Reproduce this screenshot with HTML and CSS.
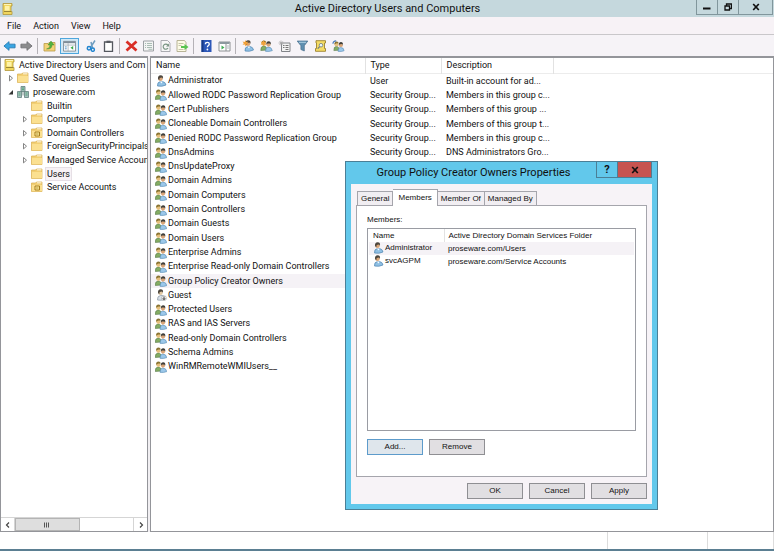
FILE: index.html
```
<!DOCTYPE html>
<html lang="en">

<head>
    <meta charset="UTF-8">
    <meta name="viewport" content="width=device-width, initial-scale=1.0">
    <title>Active Directory Users and Computers</title>
    <link rel="stylesheet" href="styles.css">
</head>

<body>
    <!-- Icon set -->
    <svg class="icon-set" aria-hidden="true">
        <symbol id="i-console" viewBox="0 0 12 12">
            <path d="M2 .5h9v2.500h-1v5.500h1v3h-9z" fill="#f0d75f" stroke="#b2973a" stroke-width=".8"/>
            <path d="M3 1.500h7" stroke="#fff6b8" stroke-width="1"/>
            <path d="M3 8.500h7" stroke="#9a8636" stroke-width="1"/>
            <path d="M4 3h4.500v4.500h-4.500z" fill="#fff3a8"/>
        </symbol>
        <symbol id="i-folder" viewBox="0 0 12 12">
            <path d="M.5 10.500v-8.500h4l1-1h5.500v9.500z" fill="#f2cf73" stroke="#d9ae4d" stroke-width=".7"/>
            <path d="M1 4h10v6.200h-10z" fill="#fbe090"/>
            <path d="M6 1.800h4.500" stroke="#fff" stroke-width=".8"/>
        </symbol>
        <symbol id="i-ou" viewBox="0 0 12 12">
            <use href="#i-folder"/>
            <path d="M4 5h4.500v4h-4.500z" fill="#fff0a0" stroke="#a67c1c" stroke-width="1"/>
            <path d="M5 7h2.500" stroke="#a67c1c" stroke-width=".8"/>
        </symbol>
        <symbol id="i-domain" viewBox="0 0 12 12">
            <path d="M4 .5h4v5h-4zM.5 5.500h4v6h-4zM7.500 5.500h4v6h-4z" fill="#a9bfc0" stroke="#62807c" stroke-width=".8"/>
            <path d="M5 2h2M5 3.700h2M1.500 7h2M1.500 9h2M8.500 7h2M8.500 9h2" stroke="#43a56b" stroke-width=".9"/>
            <path d="M6 5.500v4" stroke="#62807c" stroke-width=".8"/>
        </symbol>
        <symbol id="i-user" viewBox="0 0 12 12">
            <path d="M2.500 11q-.5-4 3-4.500h2q3 .5 3.500 3.500q-4 2-8.500 1z" fill="#8fc0e4" stroke="#4d84b0" stroke-width=".7"/>
            <path d="M5 6.500l1.500 2 1-2z" fill="#fff"/>
            <circle cx="5.500" cy="3.800" r="2.300" fill="#d9a578"/>
            <path d="M3 4q-.3-3.700 2.700-3.700 2.800 0 2.300 3.400l-1-1.200-2.300.5-.4 2.200z" fill="#4d473e"/>
        </symbol>
        <symbol id="i-guest" viewBox="0 0 12 12">
            <path d="M2.500 11q-.5-4 3-4.500h2q3 .5 3 3.500q-4 2-8 1z" fill="#d7e0e8" stroke="#8895a2" stroke-width=".7"/>
            <circle cx="5.500" cy="3.800" r="2.300" fill="#e2c9a4"/>
            <path d="M3 4q-.3-3.700 2.700-3.700 2.800 0 2.300 3.400l-1-1.200-2.300.5-.4 2.200z" fill="#4d473e"/>
            <circle cx="9" cy="9.200" r="2.400" fill="#fff" stroke="#888" stroke-width=".5"/>
            <path d="M9 7.500v3M7.800 9.300l1.200 1.400 1.200-1.400" fill="none" stroke="#222" stroke-width=".9"/>
        </symbol>
        <symbol id="i-group" viewBox="0 0 12 12">
            <path d="M.3 10.500q-.3-4.200 2.700-4.500 3-.2 3.500 4z" fill="#84ad63" stroke="#55794a" stroke-width=".6"/>
            <circle cx="3.300" cy="3.800" r="2.100" fill="#e6c07c"/>
            <path d="M1 3.800q0-3.300 2.500-3.300 2.200 0 2.200 2.200l-2.200-.2z" fill="#8a7432"/>
            <path d="M5 11.300q0-4 2.500-4.300 3.700 0 4.300 3.600q-3.300 1.300-6.800.7z" fill="#9cc8ea" stroke="#4d84b0" stroke-width=".6"/>
            <circle cx="8" cy="4.600" r="2.100" fill="#d9a578"/>
            <path d="M5.800 4.600q0-3.300 2.400-3.300 2.400 0 2.100 3.100l-1-1-2.300.2z" fill="#3f3e39"/>
        </symbol>
        <symbol id="i-star" viewBox="0 0 12 12">
            <path d="M3 0l.8 1.900 2.200-.4-1.300 1.700 1.300 1.600-2.200-.2-.8 1.900-.8-1.900-2.200.2 1.300-1.600-1.300-1.700 2.200.4z" fill="#f2a23a"/>
        </symbol>
        <symbol id="i-back" viewBox="0 0 14 12">
            <path d="M1 6l5.500-4.700v2.700h6.500v4h-6.500v2.700z" fill="#39a5e2" stroke="#2277b0" stroke-width=".9"/>
        </symbol>
        <symbol id="i-forward" viewBox="0 0 14 12">
            <path d="M13 6l-5.500-4.700v2.700h-6.500v4h6.500v2.700z" fill="#8c8c8e" stroke="#6c6c70" stroke-width=".9"/>
        </symbol>
        <symbol id="i-up" viewBox="0 0 12 12">
            <path d="M.5 11v-7.500h4l1-1h6v8.500z" fill="#f3d377" stroke="#b99b47" stroke-width=".8"/>
            <path d="M3 9q3.500-.5 3.500-4h-2l3-4 3 4h-2q0 4.500-5.500 4z" fill="#52b33f" stroke="#35822c" stroke-width=".4"/>
        </symbol>
        <symbol id="i-tree" viewBox="0 0 14 12">
            <path d="M.5 1h13v10.500h-13z" fill="#fff" stroke="#818c94"/>
            <path d="M1 1h12v2h-12z" fill="#7e8d99"/>
            <path d="M5.500 3v8.500M1 5h12" stroke="#9ba7af" stroke-width=".8"/>
            <path d="M2 7h2M2 9h2" stroke="#4c8fc7"/>
            <path d="M11 6v4l-3-2z" fill="#38a845"/>
        </symbol>
        <symbol id="i-cut" viewBox="0 0 12 12">
            <path d="M9.500.5l-4.500 7M5.500 2l1.500 6" fill="none" stroke="#6f9dc0" stroke-width="1.500"/>
            <circle cx="3.500" cy="8.300" r="1.700" fill="none" stroke="#2385cf" stroke-width="1.500"/>
            <circle cx="7.300" cy="9.700" r="1.600" fill="none" stroke="#2385cf" stroke-width="1.500"/>
        </symbol>
        <symbol id="i-paste" viewBox="0 0 12 12">
            <path d="M2 2h8v9.500h-8z" fill="#fff" stroke="#55585f" stroke-width="1.300"/>
            <path d="M4 .7h4v2.300h-4z" fill="#55585f"/>
        </symbol>
        <symbol id="i-delete" viewBox="0 0 12 12">
            <path d="M1 1.500l10 9M11 1.500l-10 9" stroke="#d92e26" stroke-width="2.800"/>
        </symbol>
        <symbol id="i-props" viewBox="0 0 12 12">
            <path d="M1 1h10v10h-10z" fill="#f3f4f4" stroke="#9da1a5"/>
            <path d="M2.500 3.500h1M2.500 5.500h1M2.500 7.500h1M4.500 3.500h5M4.500 5.500h5M4.500 7.500h5M6 9.300h4" stroke="#a9bdb4"/>
        </symbol>
        <symbol id="i-refresh" viewBox="0 0 12 12">
            <path d="M1.500.5h6.500l2.500 2.500v8.500h-9z" fill="#f7f7f7" stroke="#a2a4a8" stroke-width=".9"/>
            <path d="M8.300 5a2.600 2.600 0 1 0 .2 3" fill="none" stroke="#7a9684" stroke-width="1.200"/>
            <path d="M9.500 3.500v3h-3z" fill="#7a9684"/>
        </symbol>
        <symbol id="i-export" viewBox="0 0 12 12">
            <path d="M.5.5h7.500l1.500 2v9h-9z" fill="#fdfbe6" stroke="#b0ac8c" stroke-width=".9"/>
            <path d="M2 3.500h5M2 5.500h3M2 9.500h5" stroke="#b5b59b" stroke-width=".8"/>
            <path d="M4.500 6h3.500v-2l4 3-4 3v-2h-3.500z" fill="#58c350"/>
        </symbol>
        <symbol id="i-help" viewBox="0 0 12 12">
            <path d="M1 0h10v12h-10z" fill="#2c57b8"/>
            <path d="M1 0h2v12h-2z" fill="#173a86"/>
            <path d="M4.900 4.300q0-2 2-2 1.900 0 1.900 1.700 0 1-1 1.600-.9.500-.9 1.700" fill="none" stroke="#fff" stroke-width="1.300"/>
            <circle cx="6.900" cy="9.500" r=".9" fill="#fff"/>
        </symbol>
        <symbol id="i-panel" viewBox="0 0 12 12">
            <path d="M.5 2h11v9h-11z" fill="#fff" stroke="#8d9294"/>
            <path d="M1 2h10v2h-10z" fill="#8c999f"/>
            <path d="M7.500 4v7" stroke="#8d9294"/>
            <path d="M3 5.500v4l3-2z" fill="#3fae55"/>
            <path d="M8.500 6h2M8.500 8h2" stroke="#9ba7af" stroke-width=".8"/>
        </symbol>
        <symbol id="i-newou" viewBox="0 0 12 12">
            <path d="M3 3h8.500v8.500h-8.500z" fill="#f3f3f3" stroke="#818488"/>
            <path d="M4.500 5.500h1.500M7 5.500h3M4.500 7.500h1.500M7 7.500h3M7 9.500h3" stroke="#777"/>
            <path d="M0 3h5M2.500.5v5M1 1.300l3.400 3.400M4.400 1.300l-3.400 3.400" stroke="#a5a5a5" stroke-width=".7"/>
        </symbol>
        <symbol id="i-filter" viewBox="0 0 12 12">
            <path d="M.7 1h10.600l-3.500 4.700v5.300l-3.400-1.500v-3.800z" fill="#5f8fb0" stroke="#486f8c" stroke-width=".7"/>
            <path d="M2.500 2.300h7" stroke="#afd0e4"/>
        </symbol>
        <symbol id="i-find" viewBox="0 0 12 12">
            <path d="M1.500.7h9.500v2.300h-1v5.500h1v2.800h-10v-2.800h1v-5.500h-.5z" fill="#f5dc65" stroke="#9c822c" stroke-width=".9"/>
            <circle cx="6.500" cy="5.200" r="1.800" fill="#e7f5fb" stroke="#6e7c80" stroke-width=".8"/>
            <path d="M5.200 6.600l-2 2" stroke="#6e7c80" stroke-width="1.200"/>
        </symbol>
        <symbol id="i-open" viewBox="0 0 6 8">
            <path d="M5 2v4.500h-4.500z" fill="#333"/>
        </symbol>
        <symbol id="i-closed" viewBox="0 0 6 8">
            <path d="M1.500 1.500l3 2.700-3 2.700z" fill="#fff" stroke="#777" stroke-width=".9"/>
        </symbol>
    </svg>

    <div class="window">
        <!-- Title bar -->
        <header class="titlebar">
            <svg class="icon"><use href="#i-console"/></svg>
            <h1>Active Directory Users and Computers</h1>
            <div class="window-buttons">
                <button type="button" aria-label="Minimize"><svg class="glyph" viewBox="0 0 8 8"><path d="M0 5.500h7.500" stroke="#111" stroke-width="2"/></svg></button>
                <button type="button" aria-label="Restore"><svg class="glyph" viewBox="0 0 8 8"><path d="M1 3h4.500v4h-4.500zM2.500 2.500v-1.500h5v4.500h-1.500" fill="none" stroke="#111" stroke-width="1.300"/></svg></button>
                <button type="button" class="close" aria-label="Close"><svg class="glyph" viewBox="0 0 8 8"><path d="M1.200 1l5.600 6M6.800 1l-5.600 6" stroke="#111" stroke-width="1.700"/></svg></button>
            </div>
        </header>

        <!-- Menu -->
        <nav class="menubar">
            <button type="button">File</button>
            <button type="button">Action</button>
            <button type="button">View</button>
            <button type="button">Help</button>
        </nav>

        <!-- Toolbar -->
        <div class="toolbar">
            <button type="button" aria-label="Back"><svg class="tool"><use href="#i-back"/></svg></button>
            <button type="button" aria-label="Forward"><svg class="tool"><use href="#i-forward"/></svg></button>
            <span class="separator"></span>
            <button type="button" aria-label="Up one level"><svg class="tool"><use href="#i-up"/></svg></button>
            <button type="button" class="pressed" aria-label="Show console tree"><svg class="tool"><use href="#i-tree"/></svg></button>
            <span class="spacer"></span>
            <button type="button" aria-label="Cut"><svg class="tool"><use href="#i-cut"/></svg></button>
            <button type="button" aria-label="Paste"><svg class="tool"><use href="#i-paste"/></svg></button>
            <span class="separator"></span>
            <button type="button" aria-label="Delete"><svg class="tool"><use href="#i-delete"/></svg></button>
            <button type="button" aria-label="Properties"><svg class="tool"><use href="#i-props"/></svg></button>
            <button type="button" aria-label="Refresh"><svg class="tool"><use href="#i-refresh"/></svg></button>
            <button type="button" aria-label="Export list"><svg class="tool"><use href="#i-export"/></svg></button>
            <span class="separator"></span>
            <div class="tool-group">
                <button type="button" aria-label="Help topics"><svg class="tool"><use href="#i-help"/></svg></button>
                <button type="button" aria-label="Show action pane"><svg class="tool"><use href="#i-panel"/></svg></button>
            </div>
            <span class="separator"></span>
            <div class="tool-group">
                <button type="button" aria-label="New user"><svg class="tool"><use href="#i-user"/><use href="#i-star"/></svg></button>
                <button type="button" aria-label="New group"><svg class="tool"><use href="#i-group"/><use href="#i-star"/></svg></button>
                <button type="button" aria-label="New organizational unit"><svg class="tool"><use href="#i-newou"/></svg></button>
                <button type="button" aria-label="Filter"><svg class="tool"><use href="#i-filter"/></svg></button>
                <button type="button" aria-label="Find"><svg class="tool"><use href="#i-find"/></svg></button>
                <button type="button" aria-label="Add to group"><svg class="tool" viewBox="0 0 13 13"><use href="#i-group" x="1" y="1" width="12" height="12"/><path d="M.5 4q0-3 3.500-3" fill="none" stroke="#3f74b5" stroke-width="1.200"/></svg></button>
            </div>
        </div>

        <main class="panes">
            <!-- Console tree -->
            <section class="tree-pane">
                <ul class="tree">
                    <li><svg class="icon"><use href="#i-console"/></svg><span>Active Directory Users and Com</span></li>
                    <li class="level-1"><svg class="arrow"><use href="#i-closed"/></svg><svg class="icon"><use href="#i-folder"/></svg><span>Saved Queries</span></li>
                    <li class="level-1"><svg class="arrow"><use href="#i-open"/></svg><svg class="icon"><use href="#i-domain"/></svg><span>proseware.com</span></li>
                    <li class="level-2"><svg class="arrow"></svg><svg class="icon"><use href="#i-folder"/></svg><span>Builtin</span></li>
                    <li class="level-2"><svg class="arrow"><use href="#i-closed"/></svg><svg class="icon"><use href="#i-folder"/></svg><span>Computers</span></li>
                    <li class="level-2"><svg class="arrow"><use href="#i-closed"/></svg><svg class="icon"><use href="#i-ou"/></svg><span>Domain Controllers</span></li>
                    <li class="level-2"><svg class="arrow"><use href="#i-closed"/></svg><svg class="icon"><use href="#i-folder"/></svg><span>ForeignSecurityPrincipals</span></li>
                    <li class="level-2"><svg class="arrow"><use href="#i-closed"/></svg><svg class="icon"><use href="#i-folder"/></svg><span>Managed Service Accoun</span></li>
                    <li class="level-2 selected"><svg class="arrow"></svg><svg class="icon"><use href="#i-folder"/></svg><span>Users</span></li>
                    <li class="level-2"><svg class="arrow"></svg><svg class="icon"><use href="#i-ou"/></svg><span>Service Accounts</span></li>
                </ul>
                <div class="scrollbar">
                    <button type="button" aria-label="Scroll left"><svg class="glyph" viewBox="0 0 8 8"><path d="M5 1.500l-2.500 2.500 2.500 2.500" fill="none" stroke="#444" stroke-width="1.200"/></svg></button>
                    <div class="track"><div class="thumb"><svg class="glyph" viewBox="0 0 8 8"><path d="M1.500 1.500v5M3.500 1.500v5M5.500 1.500v5" stroke="#555" stroke-width="1"/></svg></div></div>
                    <button type="button" aria-label="Scroll right"><svg class="glyph" viewBox="0 0 8 8"><path d="M3 1.500l2.500 2.500-2.500 2.500" fill="none" stroke="#444" stroke-width="1.200"/></svg></button>
                </div>
            </section>

            <!-- Contents of the selected container -->
            <section class="list-pane">
                <table class="objects">
                    <colgroup>
                        <col class="col-name">
                        <col class="col-type">
                        <col class="col-description">
                        <col>
                    </colgroup>
                    <thead>
                        <tr><th>Name</th><th>Type</th><th>Description</th><td></td></tr>
                    </thead>
                    <tbody>
                        <tr><td><svg class="icon"><use href="#i-user"/></svg>Administrator</td><td>User</td><td>Built-in account for ad...</td></tr>
                        <tr><td><svg class="icon"><use href="#i-group"/></svg>Allowed RODC Password Replication Group</td><td>Security Group...</td><td>Members in this group c...</td></tr>
                        <tr><td><svg class="icon"><use href="#i-group"/></svg>Cert Publishers</td><td>Security Group...</td><td>Members of this group ...</td></tr>
                        <tr><td><svg class="icon"><use href="#i-group"/></svg>Cloneable Domain Controllers</td><td>Security Group...</td><td>Members of this group t...</td></tr>
                        <tr><td><svg class="icon"><use href="#i-group"/></svg>Denied RODC Password Replication Group</td><td>Security Group...</td><td>Members in this group c...</td></tr>
                        <tr><td><svg class="icon"><use href="#i-group"/></svg>DnsAdmins</td><td>Security Group...</td><td>DNS Administrators Gro...</td></tr>
                        <tr><td><svg class="icon"><use href="#i-group"/></svg>DnsUpdateProxy</td></tr>
                        <tr><td><svg class="icon"><use href="#i-group"/></svg>Domain Admins</td></tr>
                        <tr><td><svg class="icon"><use href="#i-group"/></svg>Domain Computers</td></tr>
                        <tr><td><svg class="icon"><use href="#i-group"/></svg>Domain Controllers</td></tr>
                        <tr><td><svg class="icon"><use href="#i-group"/></svg>Domain Guests</td></tr>
                        <tr><td><svg class="icon"><use href="#i-group"/></svg>Domain Users</td></tr>
                        <tr><td><svg class="icon"><use href="#i-group"/></svg>Enterprise Admins</td></tr>
                        <tr><td><svg class="icon"><use href="#i-group"/></svg>Enterprise Read-only Domain Controllers</td></tr>
                        <tr class="selected"><td><svg class="icon"><use href="#i-group"/></svg>Group Policy Creator Owners</td></tr>
                        <tr><td><svg class="icon"><use href="#i-guest"/></svg>Guest</td></tr>
                        <tr><td><svg class="icon"><use href="#i-group"/></svg>Protected Users</td></tr>
                        <tr><td><svg class="icon"><use href="#i-group"/></svg>RAS and IAS Servers</td></tr>
                        <tr><td><svg class="icon"><use href="#i-group"/></svg>Read-only Domain Controllers</td></tr>
                        <tr><td><svg class="icon"><use href="#i-group"/></svg>Schema Admins</td></tr>
                        <tr><td><svg class="icon"><use href="#i-group"/></svg>WinRMRemoteWMIUsers__</td></tr>
                    </tbody>
                </table>
            </section>
        </main>

        <footer class="statusbar">
            <span class="status-main"></span>
            <span class="status-cell"></span>
            <span class="status-last"></span>
        </footer>
    </div>

    <!-- Properties dialog -->
    <div class="dialog" role="dialog" aria-labelledby="dialog-title">
        <div class="dialog-title">
            <h2 id="dialog-title">Group Policy Creator Owners Properties</h2>
            <div class="dialog-buttons">
                <button type="button" aria-label="Help">?</button>
                <button type="button" class="close" aria-label="Close"><svg class="glyph" viewBox="0 0 8 8"><path d="M1.200 1l5.600 6M6.800 1l-5.600 6" stroke="#111" stroke-width="1.700"/></svg></button>
            </div>
        </div>
        <div class="dialog-body">
            <div class="tabs" role="tablist">
                <button type="button" role="tab">General</button>
                <button type="button" role="tab" class="active" aria-selected="true">Members</button>
                <button type="button" role="tab">Member Of</button>
                <button type="button" role="tab">Managed By</button>
            </div>
            <div class="tab-panel" role="tabpanel">
                <p id="members-label">Members:</p>
                <div class="members-box">
                    <table class="members" aria-labelledby="members-label">
                        <colgroup>
                            <col class="col-member">
                            <col>
                        </colgroup>
                        <thead>
                            <tr><th>Name</th><th>Active Directory Domain Services Folder</th></tr>
                        </thead>
                        <tbody>
                            <tr class="selected"><td><svg class="icon"><use href="#i-user"/></svg>Administrator</td><td>proseware.com/Users</td></tr>
                            <tr><td><svg class="icon"><use href="#i-user"/></svg>svcAGPM</td><td>proseware.com/Service Accounts</td></tr>
                        </tbody>
                    </table>
                </div>
                <div class="member-actions">
                    <button type="button" class="push focused">Add...</button>
                    <button type="button" class="push">Remove</button>
                </div>
            </div>
            <div class="dialog-actions">
                <button type="button" class="push">OK</button>
                <button type="button" class="push">Cancel</button>
                <button type="button" class="push">Apply</button>
            </div>
        </div>
    </div>
</body>

</html>
```
FILE: styles.css
```
* {
    box-sizing: border-box;
}

body {
    margin: 0;
    font-family: Roboto, "Open Sans", sans-serif;
    font-size: 9px;
    line-height: 12px;
    color: #111;
    background-color: #fff;
}

h1,
h2,
p,
ul {
    margin: 0;
    padding: 0;
    font-weight: normal;
}

button {
    margin: 0;
    padding: 0;
    border: none;
    background: none;
    font: inherit;
    color: inherit;
}

table {
    width: 100%;
    border-collapse: collapse;
    table-layout: fixed;
}

th,
td {
    padding: 0 0 0 5px;
    text-align: left;
    font-weight: normal;
    white-space: nowrap;
}

.icon-set {
    display: none;
}

.icon {
    width: 12px;
    height: 12px;
    flex: none;
}

.glyph {
    display: block;
    width: 8px;
    height: 8px;
    margin: 0 auto;
}

.window {
    display: flex;
    flex-direction: column;
    height: 100vh;
    border-bottom: 2px solid #5b7f92;
}

/* Title bar */
.titlebar {
    display: grid;
    grid-template-columns: 78px 1fr 78px;
    align-items: center;
    height: 17px;
    padding-left: 1px;
    background-color: #c5d8dd;
}

.titlebar h1 {
    font-size: 11px;
    text-align: center;
}

.window-buttons {
    display: flex;
    align-self: start;
    height: 15px;
}

.window-buttons button {
    width: 21px;
    border: 1px solid #81969c;
    border-top: none;
    border-right: none;
}

.window-buttons .close {
    width: 35px;
    border-right: 1px solid #81969c;
}

/* Menu and toolbar */
.menubar {
    display: flex;
    gap: 12px;
    height: 18px;
    padding-left: 7px;
    background-color: #f7f2f6;
    border-bottom: 1px solid #c9c7ca;
}

.toolbar {
    display: flex;
    align-items: center;
    height: 21px;
    padding-left: 1px;
    background-color: #f6f3f7;
}

.toolbar button {
    width: 17px;
    height: 16px;
}

.toolbar .pressed {
    width: 19px;
    margin-left: 2px;
    border: 1px solid #4ea6dc;
    background-color: #d3e9f6;
}

.tool-group {
    display: flex;
    gap: 1px;
    padding-left: 1px;
}

.tool {
    display: block;
    width: 13px;
    height: 12px;
    margin: 0 auto;
}

.separator {
    width: 1px;
    height: 16px;
    margin: 0 3px 0 2px;
    background-color: #b5b2b7;
}

.spacer {
    width: 4px;
}

/* Panes */
.panes {
    display: flex;
    flex: 1;
    gap: 2px;
    min-height: 0;
    background-color: #f1eff2;
}

.tree-pane {
    display: flex;
    flex-direction: column;
    justify-content: space-between;
    width: 148px;
    border: 1px solid #94959a;
    border-top-width: 2px;
    background-color: #fff;
}

.tree {
    display: grid;
    grid-auto-rows: 1fr;
    height: 136px;
    overflow: hidden;
    list-style: none;
}

.tree li {
    display: flex;
    align-items: center;
    gap: 3px;
    padding-left: 2px;
    white-space: nowrap;
}

.tree .level-1 {
    padding-left: 7px;
}

.tree .level-2 {
    padding-left: 21px;
}

.tree span {
    padding: 0 1px;
}

.tree .selected span {
    background-color: #f7f2f6;
    outline: 1px solid #e6dfe5;
}

.arrow {
    width: 6px;
    height: 8px;
    flex: none;
}

.scrollbar {
    display: flex;
    height: 14px;
    border-top: 1px solid #d5d5d5;
}

.scrollbar button {
    width: 13px;
}

.track {
    flex: 1;
    border: solid #d5d5d5;
    border-width: 0 1px;
}

.thumb {
    display: flex;
    align-items: center;
    width: 55%;
    height: 100%;
    border: 1px solid #b4b4b4;
    background-color: #dedede;
}

.list-pane {
    flex: 1;
    border: 1px solid #94959a;
    border-top-width: 2px;
    background-color: #fff;
}

.objects .icon,
.members .icon {
    margin-right: 1px;
    vertical-align: middle;
}

.objects {
    height: 316px;
}

.objects thead tr {
    height: 15px;
    border-bottom: 1px solid #ececec;
}

.objects th {
    border-right: 1px solid #e2e2e2;
}

.objects tbody td:first-child {
    padding-left: 4px;
}

.col-name {
    width: 214px;
}

.col-type {
    width: 76px;
}

.col-description {
    width: 112px;
}

.selected td {
    background-color: #f5f2f6;
}

/* Status bar */
.statusbar {
    display: flex;
    height: 17px;
    background-color: #fff;
}

.status-main {
    flex: 1;
}

.status-cell,
.status-last {
    width: 100px;
    border-left: 1px solid #dcdcdc;
}

.status-last {
    width: 67px;
    border-right: 1px solid #dcdcdc;
}

/* Properties dialog */
.dialog {
    position: absolute;
    top: 161px;
    left: 345px;
    width: 313px;
    padding: 0 5px 5px;
    border: 1px solid #4b7f96;
    background-color: #62c8eb;
}

.dialog-title {
    display: grid;
    grid-template-columns: 1fr 56px;
    height: 22px;
}

.dialog-title h2 {
    padding-top: 5px;
    font-size: 11px;
    text-align: center;
}

.dialog-buttons {
    display: flex;
    height: 16px;
}

.dialog-buttons button {
    width: 22px;
    border: 1px solid #4b7f96;
    border-top: none;
    font-size: 11px;
    font-weight: bold;
}

.dialog-buttons .close {
    width: 34px;
    border-left: none;
    background-color: #c75450;
}

.dialog-body {
    padding: 5px;
    background-color: #f7f3f7;
    font-family: "Liberation Sans", Arial, sans-serif;
    font-size: 8px;
}

.tabs {
    display: flex;
    align-items: flex-end;
    padding-left: 1px;
}

.tabs button {
    height: 14px;
    padding: 0 3px;
    border: 1px solid #a5a5ac;
    border-bottom: none;
    border-left: none;
    background-color: #f1eef2;
}

.tabs button:first-child {
    border-left: 1px solid #a5a5ac;
}

.tabs .active {
    height: 17px;
    padding: 0 5px 1px;
    margin-bottom: -1px;
    background-color: #fff;
    z-index: 1;
}

.tab-panel {
    padding: 8px 10px 21px;
    border: 1px solid #a5a5ac;
    background-color: #fff;
}

.members-box {
    height: 203px;
    margin-top: 2px;
    padding: 0 1px;
    border: 1px solid #9a9ca3;
}

.members tr {
    height: 13px;
}

.members th {
    padding-left: 4px;
}

.members th + th {
    border-left: 1px solid #e2e2e2;
}

.members tbody td {
    padding-left: 3px;
}

.members tbody td + td {
    padding-left: 4px;
}

.col-member {
    width: 75px;
}

.member-actions,
.dialog-actions {
    display: flex;
    gap: 6px;
    margin-top: 8px;
}

.dialog-actions {
    justify-content: flex-end;
    margin-top: 6px;
}

.push {
    width: 56px;
    height: 16px;
    border: 1px solid #8f8f93;
    background-color: #e1dfe2;
}

.push.focused {
    border-color: #5d9bcb;
    background-color: #dfe6ec;
}
```
